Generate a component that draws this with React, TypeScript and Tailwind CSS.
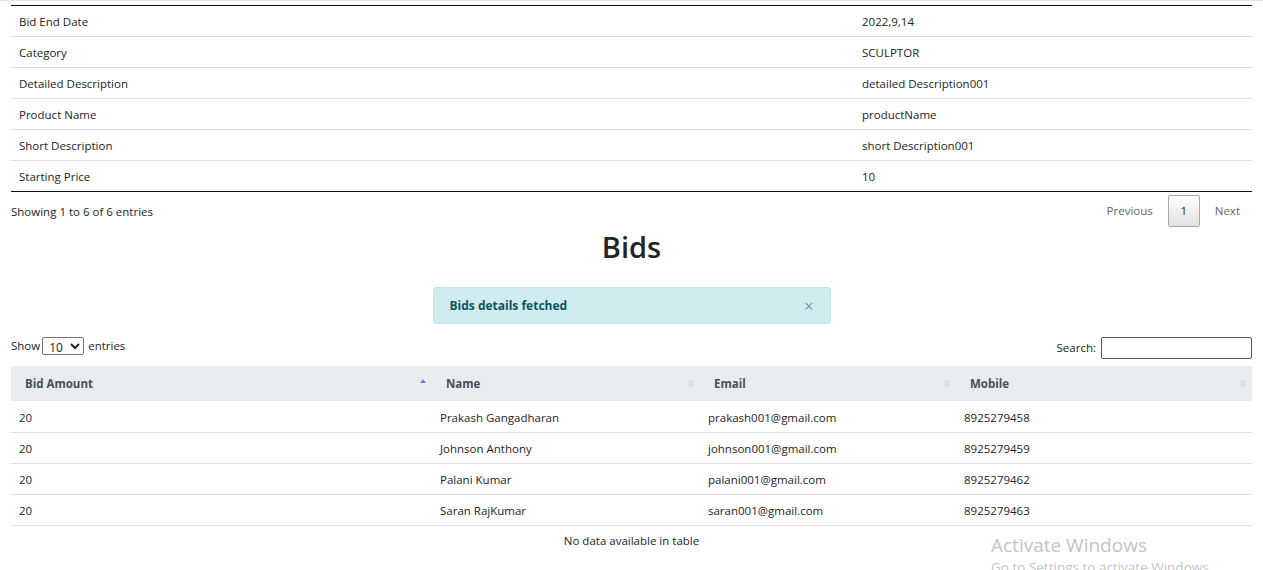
import React from 'react';

const details = [
  ['Bid End Date', '2022,9,14'],
  ['Category', 'SCULPTOR'],
  ['Detailed Description', 'detailed Description001'],
  ['Product Name', 'productName'],
  ['Short Description', 'short Description001'],
  ['Starting Price', '10'],
];

const bids = [
  ['20', 'Prakash Gangadharan', 'prakash001@gmail.com', '8925279458'],
  ['20', 'Johnson Anthony', 'johnson001@gmail.com', '8925279459'],
  ['20', 'Palani Kumar', 'palani001@gmail.com', '8925279462'],
  ['20', 'Saran RajKumar', 'saran001@gmail.com', '8925279463'],
];

const SortIcon = ({ active }: { active?: boolean }) => (
  <span className="flex flex-col gap-[1px]">
    <svg width="6" height="4" viewBox="0 0 6 4">
      <path d="M3 0 L6 4 L0 4 Z" fill={active ? '#7a7fd0' : '#dcdcdc'} />
    </svg>
    <svg width="6" height="4" viewBox="0 0 6 4">
      <path d="M0 0 L6 0 L3 4 Z" fill={active ? 'transparent' : '#dcdcdc'} />
    </svg>
  </span>
);

const HeadCell = ({ label, active, w }: { label: string; active?: boolean; w: string }) => (
  <th className={`h-[35px] p-0 ${w}`}>
    <div className="flex items-center justify-between pl-[14px] pr-[6px]">
      <span>{label}</span>
      <SortIcon active={active} />
    </div>
  </th>
);

const App: React.FC = () => {
  return (
    <div
      className="min-h-screen bg-white text-[#212529] text-[11.5px] relative overflow-hidden"
      style={{ fontFamily: '"Open Sans", "Noto Sans", sans-serif' }}
    >
      <div className="h-px bg-[#e4e4e4]"></div>
      <div className="px-[11px] pt-[4px]">
        {/* Product details */}
        <table className="w-full border-collapse border-t border-b border-[#111]">
          <tbody>
            {details.map(([k, v], i) => (
              <tr key={k} className={i > 0 ? 'border-t border-[#dee2e6]' : ''}>
                <td className="h-[31px] px-[8px] pt-[2px] w-[843px]">{k}</td>
                <td className="h-[31px] px-[8px] pt-[2px]">{v}</td>
              </tr>
            ))}
          </tbody>
        </table>

        <div className="flex items-center justify-between h-[38px]">
          <span className="pt-[2px]">Showing 1 to 6 of 6 entries</span>
          <div className="flex items-center text-[#666]">
            <span className="px-[15px]">Previous</span>
            <span className="w-[32px] h-[32px] flex items-center justify-center border border-[#a9a9a9] rounded-[2px] bg-gradient-to-b from-[#fdfdfd] to-[#e2e2e2] text-[#333]">
              1
            </span>
            <span className="pl-[15px] pr-[12px]">Next</span>
          </div>
        </div>

        <h2 className="text-center text-[29px] font-semibold leading-[34px] text-[#212529]">Bids</h2>

        <div className="flex justify-center mt-[23px]">
          <div className="w-[398px] h-[37px] bg-[#d1ecf1] border border-[#bee5eb] rounded-[3px] flex items-center justify-between pl-[16px] pr-[16px] pt-[1px] text-[#0c5460]">
            <span className="font-bold text-[12px]">Bids details fetched</span>
            <span className="text-[#7a9aa0] text-[16px] leading-none">×</span>
          </div>
        </div>

        <div className="flex items-center justify-between mt-[11px] h-[24px]">
          <div className="flex items-center gap-[2px] pb-[2px]">
            <span>Show</span>
            <select className="w-[42px] h-[18px] border border-[#767676] rounded-[2px] text-[12px] leading-[14px] px-[2px] py-0 bg-white" defaultValue="10">
              <option>10</option>
            </select>
            <span className="ml-[2px]">entries</span>
          </div>
          <div className="flex items-center gap-[5px] pt-[2px]">
            <span>Search:</span>
            <input className="w-[151px] h-[22px] border border-[#555] rounded-[2px]" />
          </div>
        </div>

        <table className="w-full border-collapse mt-[7px]">
          <thead>
            <tr className="bg-[#e9ecef] text-[#495057] font-bold text-left">
              <HeadCell label="Bid Amount" active w="w-[421px]" />
              <HeadCell label="Name" w="w-[268px]" />
              <HeadCell label="Email" w="w-[256px]" />
              <HeadCell label="Mobile" w="" />
            </tr>
          </thead>
          <tbody>
            {bids.map((r) => (
              <tr key={r[2]} className="border-b border-[#dee2e6]">
                {r.map((c, j) => (
                  <td key={j} className="h-[31px] px-[8px] pt-[2px]">
                    {c}
                  </td>
                ))}
              </tr>
            ))}
            <tr>
              <td colSpan={4} className="h-[31px] text-center">
                No data available in table
              </td>
            </tr>
          </tbody>
        </table>
      </div>

      {/* OS watermark */}
      <div className="absolute left-[991px] top-[533px] text-[#c4c4c4] pointer-events-none">
        <div className="text-[19px] leading-[25px]">Activate Windows</div>
        <div className="text-[13.5px] leading-[18px]">Go to Settings to activate Windows.</div>
      </div>
    </div>
  );
};

export default App;
